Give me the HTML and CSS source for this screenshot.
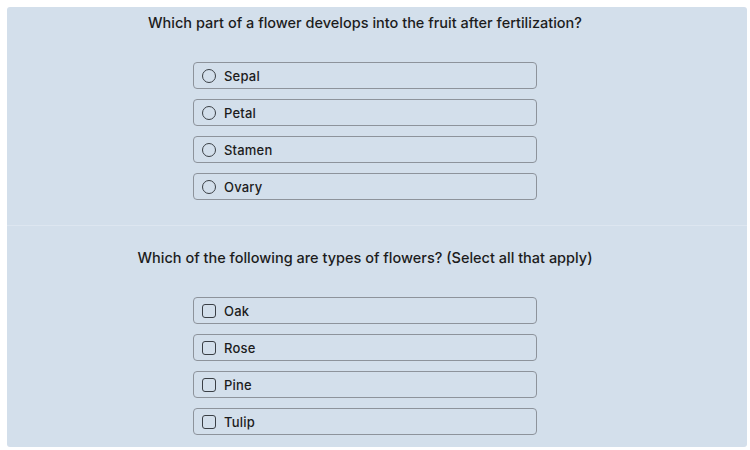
FILE: index.html
```html
<!DOCTYPE html>
<html lang="en">
<head>
    <meta charset="UTF-8">
    <meta name="viewport" content="width=device-width, initial-scale=1.0">
    <title>Flower Quiz</title>
    <link rel="stylesheet" href="styles.css">
</head>
<body>
    <div class="quiz">
        <div class="question first">
            <h2 class="question-text">Which part of a flower develops into the fruit after fertilization?</h2>
            <div class="options">
                <label class="option"><span class="radio"></span>Sepal</label>
                <label class="option"><span class="radio"></span>Petal</label>
                <label class="option"><span class="radio"></span>Stamen</label>
                <label class="option"><span class="radio"></span>Ovary</label>
            </div>
        </div>
        <div class="question second">
            <h2 class="question-text">Which of the following are types of flowers? (Select all that apply)</h2>
            <div class="options">
                <label class="option"><span class="check"></span>Oak</label>
                <label class="option"><span class="check"></span>Rose</label>
                <label class="option"><span class="check"></span>Pine</label>
                <label class="option"><span class="check"></span>Tulip</label>
            </div>
        </div>
    </div>
</body>
</html>
```

FILE: styles.css
```css
body {
    margin: 0;
    padding: 7px 3px 3px 7px;
    background-color: #fff;
    font-family: Inter, "Open Sans", sans-serif;
    color: #1c1c1c;
}

.quiz {
    width: 740px;
    height: 440px;
    background-color: #d3dfeb;
    border-radius: 3px;
    overflow: hidden;
}

.question {
    padding-right: 24px;
    display: flex;
    flex-direction: column;
    align-items: center;
}

.first {
    padding-top: 6px;
    height: 212px;
    border-bottom: 1px solid #dde6f0;
}

.second {
    padding-top: 22px;
}

.question-text {
    margin: 0;
    height: 20px;
    line-height: 20px;
    font-size: 14.5px;
    font-weight: 500;
    text-align: center;
}

.options {
    margin-top: 29px;
    display: flex;
    flex-direction: column;
    gap: 10px;
}

.option {
    box-sizing: border-box;
    width: 344px;
    height: 27px;
    display: flex;
    align-items: center;
    padding-left: 8px;
    border: 1px solid #8d939b;
    border-radius: 4px;
    font-size: 13px;
    font-weight: 500;
    letter-spacing: 0.2px;
    cursor: pointer;
}

.radio,
.check {
    box-sizing: border-box;
    width: 14px;
    height: 14px;
    margin-right: 8px;
    border: 1.2px solid #3a3f45;
}

.radio {
    border-radius: 50%;
}

.check {
    border-radius: 3px;
}
```
